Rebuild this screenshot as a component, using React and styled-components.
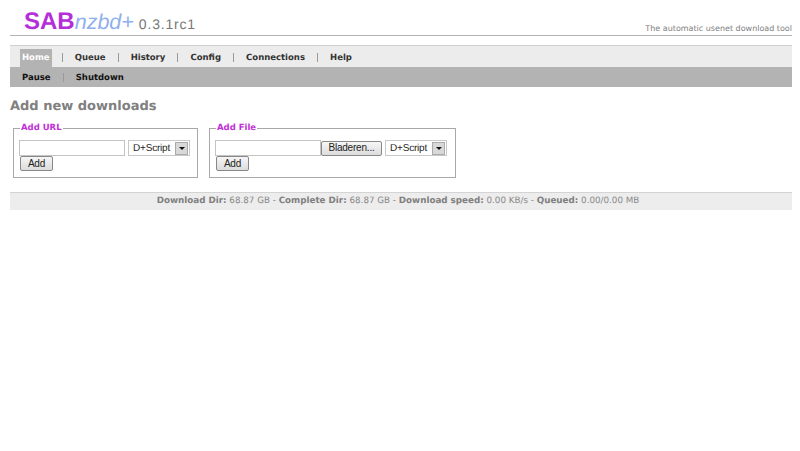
import React from "react";
import styled, { createGlobalStyle } from "styled-components";

const Global = createGlobalStyle`
  html, body { margin: 0; padding: 0; background: #fff; }
  body {
    font-family: "DejaVu Sans", Verdana, sans-serif;
    font-size: 10px;
    color: #808080;
    text-rendering: geometricPrecision;
  }
`;

const Page = styled.div`
  box-sizing: border-box;
  width: 800px;
  padding: 0 8px 0 10px;
`;

const Header = styled.div`
  display: flex;
  justify-content: space-between;
  align-items: flex-end;
  height: 36px;
  box-sizing: border-box;
  border-bottom: 1px solid #b4b4b4;
`;

const Logo = styled.div`
  display: flex;
  align-items: baseline;
  padding-left: 14px;
  font-family: "Liberation Sans", Arial, sans-serif;
  line-height: 24px;
  height: 25px;
`;

const Sab = styled.span`
  font-size: 24px;
  font-weight: 700;
  color: #b52fd8;
`;

const Nzbd = styled.span`
  font-size: 21.5px;
  font-style: italic;
  color: #8fb0ee;
`;

const Version = styled.span`
  font-size: 14px;
  color: #777;
  margin-left: 5px;
  letter-spacing: 0.8px;
`;

const Tagline = styled.div`
  font-size: 8px;
  line-height: 12px;
  color: #808080;
`;

const MainNav = styled.nav`
  margin-top: 9px;
  height: 22px;
  box-sizing: border-box;
  padding: 3px 0 0 10px;
  display: flex;
  background: #ececec;
  border-top: 1px solid #d0d0d0;
`;

const SubNav = styled.nav`
  height: 20px;
  box-sizing: border-box;
  padding: 1px 0 0 10px;
  display: flex;
  align-items: center;
  background: #b3b3b3;
`;

const NavItem = styled.a`
  font-weight: 700;
  font-size: 8.5px;
  line-height: 18px;
  padding: 0 2px;
  color: ${(p) => (p.$active ? "#fff" : "#333")};
  background: ${(p) => (p.$active ? "#b3b3b3" : "transparent")};
`;

const SubItem = styled.a`
  font-weight: 700;
  font-size: 8.5px;
  line-height: 12px;
  padding: 0 2px;
  color: #111;
`;

const Sep = styled.span`
  width: 1px;
  height: 9px;
  background: ${(p) => p.$c};
  margin: ${(p) => p.$t}px 10.1px 0 10px;
`;

const Title = styled.h1`
  margin: 12px 0 0;
  font-size: 13px;
  line-height: 16px;
  font-weight: 700;
  color: #808080;
`;

const Forms = styled.div`
  display: flex;
  gap: 11px;
  margin: 7px 0 0 3px;
`;

const Box = styled.fieldset`
  box-sizing: border-box;
  margin: 0;
  padding: 6px 0 0 5px;
  height: 56px;
  width: ${(p) => p.$w}px;
  border: 1px solid #a8a8a8;
  min-inline-size: 0;
`;

const Legend = styled.legend`
  padding: 0 1px;
  margin-left: 1px;
  font-size: 8.5px;
  line-height: 12px;
  font-weight: 700;
  color: #c22fd8;
`;

const Row = styled.div`
  display: flex;
  align-items: center;
  height: 16px;
`;

const TextInput = styled.input`
  box-sizing: border-box;
  width: 106px;
  height: 16px;
  padding: 0;
  background: #fff;
  border: 1px solid #c4c4c4;
`;

const Select = styled.div`
  box-sizing: border-box;
  width: 62px;
  height: 16px;
  margin-left: 3px;
  display: flex;
  align-items: center;
  justify-content: space-between;
  padding: 0 1px 0 4px;
  border: 1px solid #c8c8c8;
  font-family: "Liberation Sans", Arial, sans-serif;
  font-size: 10px;
  letter-spacing: -0.2px;
  color: #222;
`;

const Arrow = styled.span`
  box-sizing: border-box;
  width: 13px;
  height: 13px;
  display: flex;
  align-items: center;
  justify-content: center;
  background: #d8d8d8;
  border: 1px solid #aaa;
  &::after {
    content: "";
    border-left: 3px solid transparent;
    border-right: 3px solid transparent;
    border-top: 3px solid #111;
  }
`;

const Button = styled.button`
  box-sizing: border-box;
  height: 15px;
  width: ${(p) => p.$w}px;
  padding: 0;
  border: 1px solid #888;
  border-radius: 2px;
  background: linear-gradient(#f6f6f6, #dcdcdc);
  font-family: "Liberation Sans", Arial, sans-serif;
  font-size: 10px;
  letter-spacing: -0.2px;
  line-height: 12px;
  color: #222;
`;

const AddButton = styled(Button)`
  display: block;
  margin-left: 1px;
`;

const Status = styled.div`
  margin-top: 14px;
  height: 18px;
  box-sizing: border-box;
  padding-right: 6px;
  border-top: 1px solid #d4d4d4;
  background: #ededed;
  text-align: center;
  font-size: 8.75px;
  line-height: 16px;
  color: #888;
  b { color: #808080; }
`;

const mainItems = ["Queue", "History", "Config", "Connections", "Help"];

export default function App() {
  return (
    <Page>
      <Global />
      <Header>
        <Logo>
          <Sab>SAB</Sab>
          <Nzbd>nzbd+</Nzbd>
          <Version>0.3.1rc1</Version>
        </Logo>
        <Tagline>The automatic usenet download tool</Tagline>
      </Header>
      <MainNav>
        <NavItem $active>Home</NavItem>
        {mainItems.map((m) => (
          <React.Fragment key={m}>
            <Sep $c="#999" $t={4} />
            <NavItem>{m}</NavItem>
          </React.Fragment>
        ))}
      </MainNav>
      <SubNav>
        <SubItem>Pause</SubItem>
        <Sep $c="#999" $t={0} />
        <SubItem>Shutdown</SubItem>
      </SubNav>
      <Title>Add new downloads</Title>
      <Forms>
        <Box $w={185}>
          <Legend>Add URL</Legend>
          <Row>
            <TextInput />
            <Select>D+Script<Arrow /></Select>
          </Row>
          <AddButton $w={33}>Add</AddButton>
        </Box>
        <Box $w={247}>
          <Legend>Add File</Legend>
          <Row>
            <TextInput />
            <Button $w={61}>Bladeren...</Button>
            <Select>D+Script<Arrow /></Select>
          </Row>
          <AddButton $w={33}>Add</AddButton>
        </Box>
      </Forms>
      <Status>
        <b>Download Dir:</b> 68.87 GB - <b>Complete Dir:</b> 68.87 GB - <b>Download speed:</b> 0.00 KB/s - <b>Queued:</b> 0.00/0.00 MB
      </Status>
    </Page>
  );
}
